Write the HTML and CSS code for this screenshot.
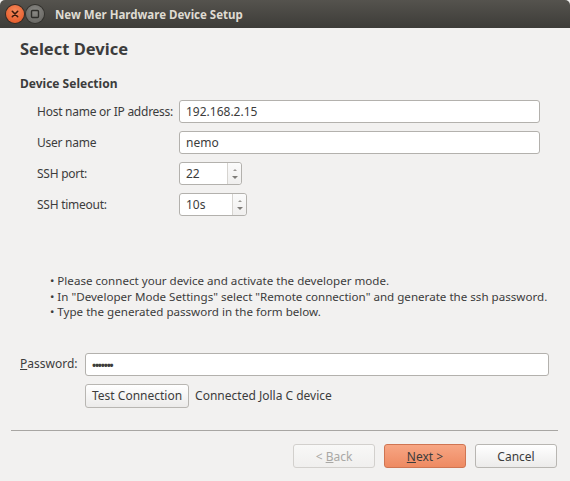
FILE: index.html
```html
<!DOCTYPE html>
<html>
<head>
<meta charset="utf-8">
<link rel="stylesheet" href="styles.css">
</head>
<body>
<div class="window">
  <div class="titlebar">
    <span class="wbtn close">
      <svg width="18" height="18" viewBox="0 0 18 18"><path d="M6.3 6.3 L11.7 11.7 M11.7 6.3 L6.3 11.7" stroke="#3a1a0c" stroke-width="1.6" stroke-linecap="round"/></svg>
    </span>
    <span class="wbtn max">
      <svg width="18" height="18" viewBox="0 0 18 18"><rect x="5.5" y="5.5" width="7" height="7" rx="1" fill="none" stroke="#2e2d2a" stroke-width="1.4"/></svg>
    </span>
    <span class="title">New Mer Hardware Device Setup</span>
  </div>
  <div class="content">
    <h1 class="page-title">Select Device</h1>
    <h2 class="section-title">Device Selection</h2>
    <div class="form">
      <label class="lbl">Host name or IP address:</label>
      <div class="field wide">192.168.2.15</div>
      <label class="lbl">User name</label>
      <div class="field wide">nemo</div>
      <label class="lbl">SSH port:</label>
      <div class="spin port"><span class="spin-text">22</span><span class="spin-arrows"><span class="up"></span><span class="down"></span></span></div>
      <label class="lbl">SSH timeout:</label>
      <div class="spin timeout"><span class="spin-text">10s</span><span class="spin-arrows"><span class="up"></span><span class="down"></span></span></div>
    </div>
    <ul class="notes">
      <li>Please connect your device and activate the developer mode.</li>
      <li>In "Developer Mode Settings" select "Remote connection" and generate the ssh password.</li>
      <li>Type the generated password in the form below.</li>
    </ul>
    <div class="pw-row">
      <label class="lbl pw-lbl"><u>P</u>assword:</label>
      <div class="field pw">&bull;&bull;&bull;&bull;&bull;&bull;&bull;</div>
    </div>
    <div class="test-row">
      <button class="btn test">Test Connection</button>
      <span class="status">Connected Jolla C device</span>
    </div>
  </div>
  <div class="separator"></div>
  <div class="buttons">
    <button class="btn disabled">&lt; <u>B</u>ack</button>
    <button class="btn primary"><u>N</u>ext &gt;</button>
    <button class="btn">Cancel</button>
  </div>
</div>
</body>
</html>
```

FILE: styles.css
```css
html, body {
  margin: 0;
  padding: 0;
  background: #f2f1f0;
}
.window {
  width: 570px;
  height: 481px;
  background: #f2f1f0;
  font-family: "Noto Sans", "DejaVu Sans", sans-serif;
  font-size: 12px;
  color: #3c3c3c;
  display: flex;
  flex-direction: column;
  overflow: hidden;
}
.titlebar {
  height: 28px;
  flex: none;
  background: linear-gradient(#55534e, #3d3c38);
  border-radius: 5px 5px 0 0;
  display: flex;
  align-items: center;
  padding-left: 6px;
  gap: 1px;
}
.wbtn {
  width: 18px;
  height: 18px;
  border-radius: 50%;
  display: flex;
  align-items: center;
  justify-content: center;
}
.wbtn.close {
  background: radial-gradient(circle at 50% 35%, #f58a5c, #e3511f);
  box-shadow: 0 0 0 1px #3a2a22;
}
.wbtn.max {
  background: radial-gradient(circle at 50% 35%, #8a8985, #605f5b);
  box-shadow: 0 0 0 1px #33322e;
  margin-left: 1px;
}
.title {
  margin-left: 10px;
  color: #dfdbd2;
  font-weight: bold;
  font-size: 11.5px;
}
.content {
  flex: 1;
  padding: 0 21px 0 20px;
  display: flex;
  flex-direction: column;
}
.page-title {
  margin: 10px 0 0 0;
  font-size: 16.5px;
  font-weight: bold;
  line-height: 22px;
}
.section-title {
  margin: 16px 0 0 0;
  font-size: 12px;
  font-weight: bold;
  line-height: 16px;
}
.form {
  display: grid;
  grid-template-columns: 142px auto;
  row-gap: 8px;
  margin: 8px 0 0 17px;
  align-items: center;
  justify-items: start;
}
.lbl {
  line-height: 16px;
  white-space: nowrap;
}
.form .lbl {
  letter-spacing: -0.25px;
}
.field {
  height: 21px;
  background: #fff;
  border: 1px solid #b3b1ad;
  border-radius: 3px;
  padding: 0 6px;
  display: flex;
  align-items: center;
  box-sizing: content-box;
}
.field.wide {
  width: 347px;
}
.spin {
  height: 21px;
  background: #fff;
  border: 1px solid #b3b1ad;
  border-radius: 3px;
  display: flex;
}
.spin.port { width: 61px; }
.spin.timeout { width: 66px; }
.spin-text {
  flex: 1;
  padding-left: 6px;
  display: flex;
  align-items: center;
  border-right: 1px solid #d6d4d0;
}
.spin-arrows {
  width: 13px;
  display: flex;
  flex-direction: column;
  align-items: center;
  justify-content: space-between;
  padding: 6px 0 5px;
  background: linear-gradient(#fbfbfb, #f0efee);
  border-radius: 0 3px 3px 0;
}
.up {
  width: 0; height: 0;
  border-left: 2px solid transparent;
  border-right: 2px solid transparent;
  border-bottom: 2px solid #9a9894;
}
.down {
  width: 0; height: 0;
  border-left: 3px solid transparent;
  border-right: 3px solid transparent;
  border-top: 3px solid #7e7c78;
}
.notes {
  list-style: none;
  margin: 57px 0 0 30px;
  padding: 0;
  line-height: 15.5px;
  font-size: 11.6px;
}
.notes li::before {
  content: "\2022";
  margin-right: 3px;
}
.pw-row {
  margin-top: 33px;
  display: flex;
  align-items: center;
}
.pw-lbl {
  width: 65px;
}
.field.pw {
  width: 450px;
  font-size: 11px;
  font-weight: bold;
  letter-spacing: -1.2px;
}
.test-row {
  margin: 8px 0 0 65px;
  display: flex;
  align-items: center;
  gap: 6px;
}
.btn {
  font-family: inherit;
  font-size: 12px;
  color: #3c3c3c;
  height: 24px;
  border: 1px solid #b8b6b2;
  border-radius: 3px;
  background: linear-gradient(#ffffff, #ecebea);
  padding: 0 6px;
  margin: 0;
}
.btn u { text-decoration: underline; }
.separator {
  height: 1px;
  background: #a8a6a3;
  margin: 0 12px 13px 11px;
  flex: none;
}
.buttons {
  display: flex;
  justify-content: flex-end;
  gap: 9px;
  padding: 0 13px 13px 0;
  flex: none;
}
.buttons .btn {
  width: 82px;
}
.btn.disabled {
  color: #a9a8a5;
  border-color: #d2d0cd;
  background: linear-gradient(#f8f8f7, #f0efee);
}
.btn.primary {
  background: linear-gradient(#f7a684, #ee8a62);
  border-color: #cf7552;
  color: #3c3c3c;
}
```
